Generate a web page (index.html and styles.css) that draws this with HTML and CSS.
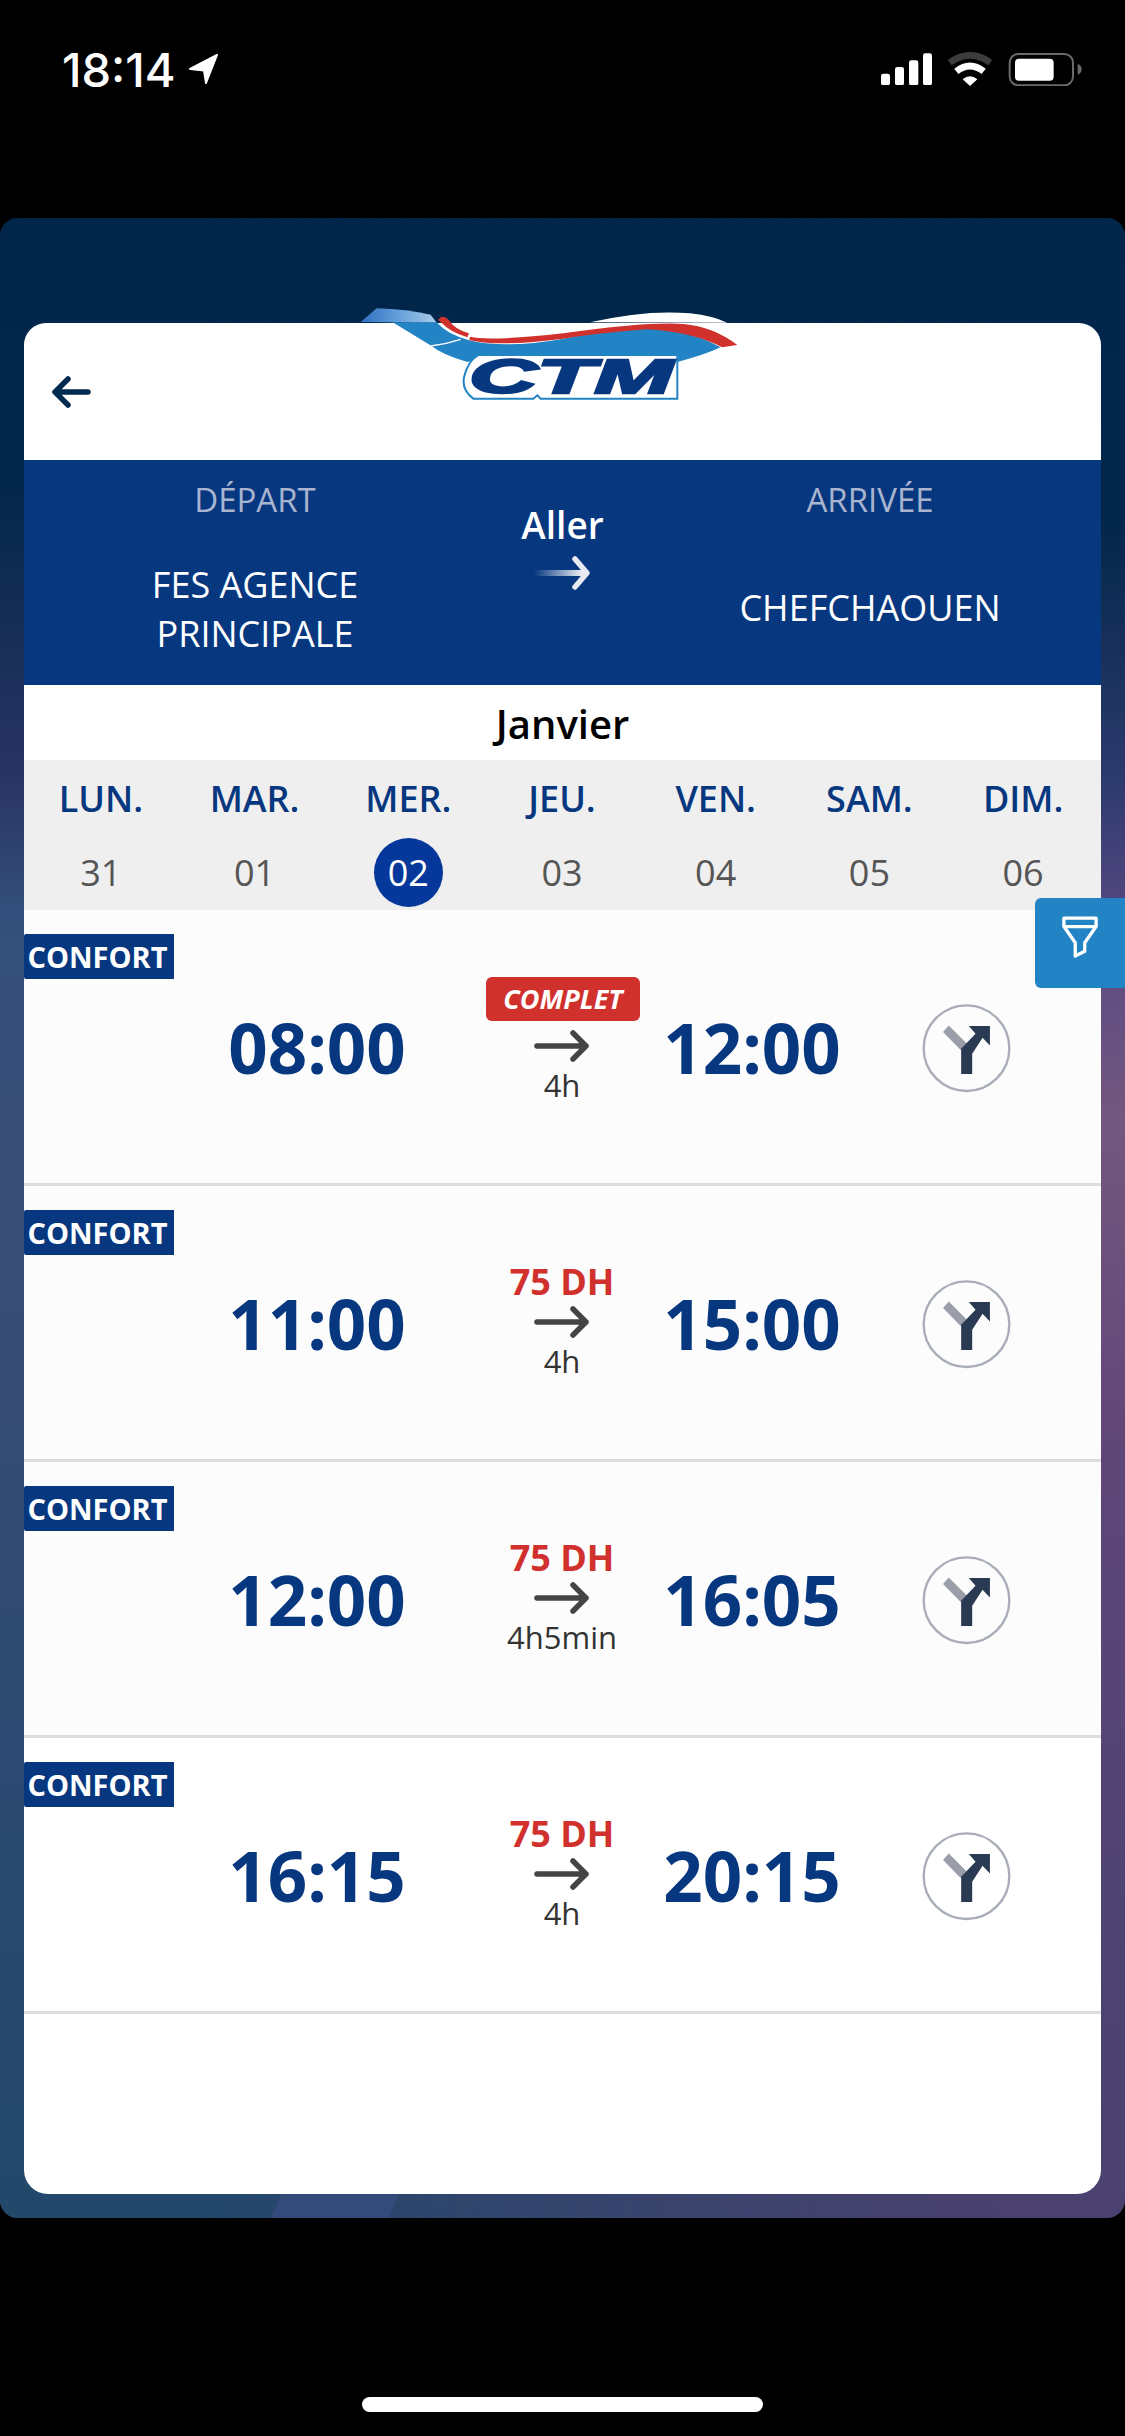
FILE: index.html
```html
<!DOCTYPE html>
<html lang="fr">
<head>
<meta charset="utf-8">
<title>CTM</title>
<link rel="stylesheet" href="styles.css">
</head>
<body>
<header class="status">
  <div class="clock"><span>18:14</span>
    <svg class="nav" width="32" height="32" viewBox="0 0 32 32"><path d="M29 2 2 16l14 1.500L18 30Z" fill="#fff" stroke="#fff" stroke-width="2" stroke-linejoin="round"/></svg>
  </div>
  <div class="sys">
    <svg width="51" height="32" viewBox="66 68 153 96"><g fill="#fff"><rect x="66" y="130" width="27" height="35" rx="7"/><rect x="108" y="110" width="27" height="55" rx="7"/><rect x="150" y="90" width="28" height="75" rx="7"/><rect x="192" y="69" width="27" height="96" rx="7"/></g></svg>
    <svg class="wifi" width="46" height="34" viewBox="264 64 138 102"><path d="M272 96Q333 52 394 96" fill="none" stroke="#3c3c3c" stroke-width="20"/><path d="M292 122Q333 90 374 122" fill="none" stroke="#fff" stroke-width="20"/><path d="M311 146Q333 128 355 146L333 166Z" fill="#fff"/></svg>
    <svg class="batt" width="74" height="34" viewBox="445 64 222 102"><rect x="450" y="70" width="190" height="94" rx="26" fill="none" stroke="#6a6a6a" stroke-width="6"/><rect x="466" y="84" width="116" height="66" rx="12" fill="#fff"/><path d="M654 100Q666 104 666 116T654 132Z" fill="#6a6a6a"/></svg>
  </div>
</header>

<main class="app">
  <section class="card">
    <svg class="logo" width="440" height="130" viewBox="0 0 1320 390" role="img" aria-label="CTM">
      <defs><linearGradient id="wing" x1="0" x2="1" y1="0" y2="0"><stop offset="0" stop-color="#2f6fc0"/><stop offset=".45" stop-color="#5e9bd8"/><stop offset="1" stop-color="#a9cdea"/></linearGradient></defs>
      <path d="M780 97Q950 58 1080 70Q1150 78 1192 98Z" fill="#fff"/>
      <path d="M92 96 140 55Q230 58 302 74L320 98Z" fill="url(#wing)"/>
      <path d="M188 97H320Q350 132 415 150Q520 178 700 146Q900 106 1000 116Q1100 130 1172 172Q1120 196 1045 215H410Q340 196 300 165Z" fill="#2284c4"/>
      <path d="M302 168Q350 162 392 148" fill="none" stroke="#fff" stroke-width="4"/>
      <path d="M324 90Q338 70 358 92Q375 118 417 130L412 142Q360 126 336 100Z" fill="#d0312d"/>
      <path d="M420 140Q480 154 700 130Q950 95 1060 102Q1150 110 1222 165L1176 172Q1090 126 950 118Q800 130 700 146Q500 172 418 150Z" fill="#d0312d"/>
      <path d="M445 195H1042V326H632L622 316 610 326H430Q395 300 402 262Q412 215 445 195Z" fill="#fff" stroke="#2284c4" stroke-width="6"/>
      <text class="logo-text" x="418" y="310" textLength="610" lengthAdjust="spacingAndGlyphs">CTM</text>
    </svg>

    <div class="top">
      <svg class="back" width="40" height="32" viewBox="0 0 40 32"><path d="M37 16H4M17 3 4 16l13 13" fill="none" stroke="#012a4f" stroke-width="5.500" stroke-linecap="round" stroke-linejoin="round"/></svg>
    </div>

    <div class="route">
      <div class="place">
        <div class="label">DÉPART</div>
        <div class="city">FES AGENCE<br>PRINCIPALE</div>
      </div>
      <div class="way">
        <div class="way-name">Aller</div>
        <svg width="60" height="36" viewBox="0 0 60 36"><defs><linearGradient id="fade"><stop offset="0" stop-color="#fff" stop-opacity="0"/><stop offset="1" stop-color="#fff"/></linearGradient></defs><rect x="1" y="15" width="52" height="6" fill="url(#fade)"/><path d="M42 4 54 18 42 32" fill="none" stroke="#e6eaf3" stroke-width="5.500" stroke-linecap="round" stroke-linejoin="round"/></svg>
      </div>
      <div class="place">
        <div class="label">ARRIVÉE</div>
        <div class="city city-single">CHEFCHAOUEN</div>
      </div>
    </div>

    <div class="month">Janvier</div>

    <div class="week">
      <div class="day"><span class="dname">LUN.</span><span class="dnum">31</span></div>
      <div class="day"><span class="dname">MAR.</span><span class="dnum">01</span></div>
      <div class="day"><span class="dname">MER.</span><span class="dnum on">02</span></div>
      <div class="day"><span class="dname">JEU.</span><span class="dnum">03</span></div>
      <div class="day"><span class="dname">VEN.</span><span class="dnum">04</span></div>
      <div class="day"><span class="dname">SAM.</span><span class="dnum">05</span></div>
      <div class="day"><span class="dname">DIM.</span><span class="dnum">06</span></div>
    </div>

    <div class="trips">
      <article class="trip">
        <span class="tag">CONFORT</span>
        <div class="time">08:00</div>
        <div class="mid"><div class="price-slot"><span class="full">COMPLET</span></div>
          <svg class="arrow" width="56" height="34" viewBox="0 0 56 34"><path d="M3 17H52M39 4 52 17 39 30" fill="none" stroke="#444" stroke-width="5.500" stroke-linecap="round" stroke-linejoin="round"/></svg>
          <div class="dur">4h</div></div>
        <div class="time">12:00</div>
        <svg class="branch" width="91" height="91" viewBox="122 368 272 272"><circle cx="258" cy="503" r="128" fill="none" stroke="#a8adb9" stroke-width="7"/><path d="M205 435 188 455 242 510 258 488Z" fill="#9a9ea9"/><path d="M242 580H275V520L306 472 328 495V437H265L285 460 242 505Z" fill="#2a3a52"/></svg>
      </article>
      <article class="trip">
        <span class="tag">CONFORT</span>
        <div class="time">11:00</div>
        <div class="mid"><div class="price-slot"><span class="price">75 DH</span></div>
          <svg class="arrow" width="56" height="34" viewBox="0 0 56 34"><path d="M3 17H52M39 4 52 17 39 30" fill="none" stroke="#444" stroke-width="5.500" stroke-linecap="round" stroke-linejoin="round"/></svg>
          <div class="dur">4h</div></div>
        <div class="time">15:00</div>
        <svg class="branch" width="91" height="91" viewBox="122 368 272 272"><circle cx="258" cy="503" r="128" fill="none" stroke="#a8adb9" stroke-width="7"/><path d="M205 435 188 455 242 510 258 488Z" fill="#9a9ea9"/><path d="M242 580H275V520L306 472 328 495V437H265L285 460 242 505Z" fill="#2a3a52"/></svg>
      </article>
      <article class="trip">
        <span class="tag">CONFORT</span>
        <div class="time">12:00</div>
        <div class="mid"><div class="price-slot"><span class="price">75 DH</span></div>
          <svg class="arrow" width="56" height="34" viewBox="0 0 56 34"><path d="M3 17H52M39 4 52 17 39 30" fill="none" stroke="#444" stroke-width="5.500" stroke-linecap="round" stroke-linejoin="round"/></svg>
          <div class="dur">4h5min</div></div>
        <div class="time">16:05</div>
        <svg class="branch" width="91" height="91" viewBox="122 368 272 272"><circle cx="258" cy="503" r="128" fill="none" stroke="#a8adb9" stroke-width="7"/><path d="M205 435 188 455 242 510 258 488Z" fill="#9a9ea9"/><path d="M242 580H275V520L306 472 328 495V437H265L285 460 242 505Z" fill="#2a3a52"/></svg>
      </article>
      <article class="trip">
        <span class="tag">CONFORT</span>
        <div class="time">16:15</div>
        <div class="mid"><div class="price-slot"><span class="price">75 DH</span></div>
          <svg class="arrow" width="56" height="34" viewBox="0 0 56 34"><path d="M3 17H52M39 4 52 17 39 30" fill="none" stroke="#444" stroke-width="5.500" stroke-linecap="round" stroke-linejoin="round"/></svg>
          <div class="dur">4h</div></div>
        <div class="time">20:15</div>
        <svg class="branch" width="91" height="91" viewBox="122 368 272 272"><circle cx="258" cy="503" r="128" fill="none" stroke="#a8adb9" stroke-width="7"/><path d="M205 435 188 455 242 510 258 488Z" fill="#9a9ea9"/><path d="M242 580H275V520L306 472 328 495V437H265L285 460 242 505Z" fill="#2a3a52"/></svg>
      </article>
    </div>
  </section>
  <button class="filter" type="button" aria-label="Filtrer">
    <svg width="36" height="42" viewBox="0 0 38 44"><path d="M2 2H36V11L24 28V37L14 42V28L2 11ZM2 11H36" fill="none" stroke="#fff" stroke-width="3.500" stroke-linejoin="round"/></svg>
  </button>
</main>

<footer class="home"><span class="home-bar"></span></footer>
</body>
</html>
```

FILE: styles.css
```css
* { box-sizing: border-box; }
html, body { margin: 0; padding: 0; }
body {
  width: 1125px;
  height: 2436px;
  background: #000;
  font-family: "Open Sans", "Noto Sans", sans-serif;
  overflow: hidden;
  display: flex;
  flex-direction: column;
}

/* status bar */
.status {
  height: 218px;
  flex: none;
  padding: 52px 43px 0 62px;
  display: flex;
  justify-content: space-between;
  align-items: flex-start;
  color: #fff;
}
.clock {
  display: flex;
  align-items: center;
  gap: 12px;
  height: 34px;
  font-family: Inter, Roboto, sans-serif;
  font-weight: 500;
  font-size: 47px;
  letter-spacing: 0;
}
.sys { display: flex; align-items: center; gap: 15px; height: 34px; }

/* app frame */
.app {
  position: relative;
  height: 2000px;
  flex: none;
  padding: 105px 24px 24px;
  border-radius: 18px;
  overflow: hidden;
  background: linear-gradient(180deg, #01264a 0, #02274a 300px, #2c3a6c 560px, #5c4a85 720px, #73587f 900px, #5f4678 1240px, #4e4373 1700px, #4a4170 2000px);
}
.app::before {
  content: "";
  position: absolute;
  inset: 0;
  background: linear-gradient(180deg, #01264a 0, #02274a 260px, #2a3463 560px, #33507c 700px, #3a4d74 1000px, #2d4a72 1500px, #22486a 2000px);
  -webkit-mask-image: linear-gradient(90deg, #000 0, #000 200px, transparent 1000px);
  mask-image: linear-gradient(90deg, #000 0, #000 200px, transparent 1000px);
}
.app::after {
  content: "";
  position: absolute;
  left: 276px;
  bottom: 0;
  width: 118px;
  height: 24px;
  background: #324b7a;
  transform: skewX(-22deg);
}

.card {
  position: relative;
  z-index: 1;
  height: 1871px;
  background: #fff;
  border-radius: 22px 22px 24px 24px;
  display: flex;
  flex-direction: column;
}
.logo { position: absolute; left: 306px; top: -33px; z-index: 2; }
.logo-text {
  font-family: "Liberation Sans", sans-serif;
  font-weight: 700;
  font-style: italic;
  font-size: 142px;
  fill: #06377f;
  stroke: #06377f;
  stroke-width: 7px;
}

.top { height: 137px; flex: none; padding: 53px 0 0 27px; }
.back { display: block; }

/* route band */
.route {
  flex: none;
  height: 225px;
  background: #06377f;
  display: grid;
  grid-template-columns: 462px 153px 462px;
  color: #fff;
  text-align: center;
}
.place { padding-top: 17px; }
.label { font-size: 33px; line-height: 46px; color: #a9b4cf; }
.city { font-size: 36px; line-height: 49px; margin-top: 37px; font-weight: 500; }
.city-single { margin-top: 60px; }
.way { padding-top: 42px; display: flex; flex-direction: column; align-items: center; }
.way-name { font-size: 37px; line-height: 46px; font-weight: 600; }
.way svg { margin-top: 7px; }

/* calendar */
.month {
  flex: none;
  height: 75px;
  font-size: 40px;
  line-height: 78px;
  font-weight: 600;
  color: #000;
  text-align: center;
}
.week {
  flex: none;
  height: 150px;
  background: #efefef;
  display: grid;
  grid-template-columns: repeat(7, 1fr);
  text-align: center;
  padding-right: 1px;
}
.day { display: flex; flex-direction: column; align-items: center; padding-top: 16px; }
.dname { font-size: 36px; line-height: 46px; color: #06377f; font-weight: 600; }
.dnum {
  width: 69px;
  height: 69px;
  margin-top: 16px;
  border-radius: 50%;
  font-size: 36px;
  line-height: 69px;
  color: #555;
}
.dnum.on { background: #06379a; color: #fff; }

/* trips */
.trip {
  position: relative;
  height: 276px;
  padding: 0 9px 0 150px;
  background: #fcfcfc;
  border-bottom: 3px solid #ddd;
  display: grid;
  grid-template-columns: 286px 204px 176px 252px;
  align-items: center;
  justify-items: center;
}
.trip:last-child { background: #fff; }
.tag {
  position: absolute;
  left: 0;
  top: 24px;
  width: 150px;
  height: 45px;
  padding-right: 3px;
  background: #06377f;
  color: #fff;
  font-size: 29px;
  font-weight: 700;
  line-height: 46px;
  text-align: center;
  border-radius: 2px 0 0 2px;
}
.time {
  font-size: 69px;
  font-weight: 700;
  color: #06377f;
  line-height: 80px;
  white-space: nowrap;
  padding-top: 1px;
}
.mid { display: flex; flex-direction: column; align-items: center; padding-bottom: 6px; }
.price-slot { height: 46px; display: flex; align-items: center; }
.full {
  width: 154px;
  height: 44px;
  margin: -13px 0 0 2px;
  background: #d0312d;
  color: #fff;
  border-radius: 6px;
  font-size: 27px;
  font-weight: 700;
  font-style: italic;
  line-height: 44px;
  text-align: center;
}
.price { font-size: 36px; font-weight: 700; color: #d0312d; line-height: 46px; }
.arrow { display: block; }
.dur { font-size: 31px; line-height: 40px; color: #333; white-space: nowrap; margin-top: 2px; }
.branch { display: block; margin-top: 3px; }

/* filter tab */
.filter {
  position: absolute;
  z-index: 3;
  right: 0;
  top: 680px;
  width: 90px;
  height: 90px;
  padding: 18px 0 0 27px;
  border: 0;
  border-radius: 6px 0 0 6px;
  background: #2284c4;
  display: flex;
  align-items: flex-start;
}

/* home indicator */
.home { flex: 1; display: flex; justify-content: center; padding-top: 179px; }
.home-bar { width: 401px; height: 15px; border-radius: 8px; background: #fff; }
```
